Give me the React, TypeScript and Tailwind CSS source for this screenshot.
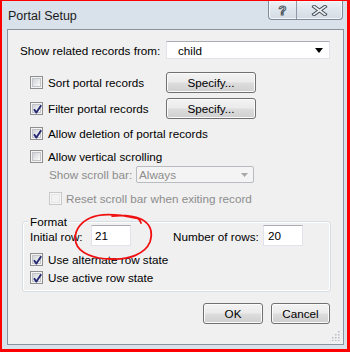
import clsx from 'clsx'

// Win7-style check box, 13x13
function Check({ checked, disabled }: { checked?: boolean; disabled?: boolean }) {
  return (
    <span
      className={clsx(
        'relative grid h-[13px] w-[13px] shrink-0 place-items-center border',
        disabled ? 'border-[#c8c8c8] bg-[#f7f7f7]' : 'border-[#8e8f8f] bg-[#f4f4f4]'
      )}
    >
      <span
        className={clsx(
          'h-[9px] w-[9px] border',
          disabled
            ? 'border-[#e6e6e6] bg-[#f2f2f2]'
            : 'border-[#c2c4c8] bg-[linear-gradient(135deg,#cfd2d7_0%,#e8e9eb_55%,#fbfbfb_100%)]'
        )}
      />
      {checked && (
        <svg className="absolute left-0 top-0" width="13" height="13" viewBox="0 0 13 13">
          <path d="M3 6.2 L5.4 9.6 L10.2 2.2" fill="none" stroke="#262a72" strokeWidth="1.9" strokeLinejoin="round" />
        </svg>
      )}
    </span>
  )
}

function Button({ label, className }: { label: string; className?: string }) {
  return (
    <div
      className={clsx(
        'grid h-[21px] place-items-center rounded-[3px] border border-[#707070] bg-[linear-gradient(#f3f3f3_0%,#ebebeb_48%,#dddddd_52%,#cfcfcf_100%)] shadow-[inset_0_0_0_1px_#fbfbfb]',
        className
      )}
    >
      {label}
    </div>
  )
}

function Row({ className, children }: { className?: string; children: React.ReactNode }) {
  return <div className={clsx('flex items-center whitespace-nowrap', className)}>{children}</div>
}

export default function App() {
  return (
    <div className="relative h-[352px] w-[350px] overflow-hidden font-['Liberation_Sans',Arial,sans-serif] text-[11.7px] leading-none text-black">
      <div className="flex h-full w-full flex-col border-b-[3px] border-l-2 border-r-[3px] border-t border-[#ff0000] bg-[#d9e1ea]">
        {/* title bar */}
        <div className="flex h-[28px] shrink-0 items-start justify-between pl-[6px] pr-[4px]">
          <span className="self-center pt-[2px] text-[12.5px] text-[#1b1b1b]">Portal Setup</span>
          <div className="flex h-[19px] overflow-hidden rounded-b-[4px] border border-t-0 border-[#7f8b98] bg-[linear-gradient(#eef2f6,#dfe5ec_50%,#d3dbe4)] shadow-[inset_0_0_0_1px_#f5f8fb]">
            <div className="grid w-[28px] place-items-center border-r border-[#8e99a5] text-[13px] font-bold text-[#f6f7f8] [-webkit-text-stroke:1px_#4c5661]">
              ?
            </div>
            <div className="grid w-[45px] place-items-center">
              <svg width="17" height="11" viewBox="0 0 17 11">
                <path d="M3 1.5 L14 9.5 M14 1.5 L3 9.5" stroke="#4a535d" strokeWidth="3.6" strokeLinecap="square" />
                <path d="M3 1.5 L14 9.5 M14 1.5 L3 9.5" stroke="#eef0f2" strokeWidth="1.6" strokeLinecap="square" />
              </svg>
            </div>
          </div>
        </div>

        {/* client area */}
        <div className="relative ml-[5px] mr-[3px] flex h-[316px] shrink-0 flex-col border border-[#8a939d] bg-[#f0f0f0]">
          <Row className="mt-[11px] h-[18px] pl-[12px]">
            <span className="w-[146px] pt-[2px]">Show related records from:</span>
            <div className="flex h-[18px] w-[164px] items-center justify-between border border-[#e2e3ea] border-t-[#abadb3] bg-white pl-[11px] pr-[6px]">
              <span className="pt-[1px]">child</span>
              <svg width="8" height="5" viewBox="0 0 8 5">
                <path d="M0 0 H8 L4 5 Z" fill="#000" />
              </svg>
            </div>
          </Row>

          <Row className="mt-[13px] h-[21px] pl-[22px]">
            <div className="flex w-[136px] items-center gap-[5px]">
              <Check />
              <span className="pt-[1px]">Sort portal records</span>
            </div>
            <Button label="Specify..." className="w-[90px]" />
          </Row>

          <Row className="mt-[5px] h-[21px] pl-[22px]">
            <div className="flex w-[136px] items-center gap-[5px]">
              <Check checked />
              <span className="pt-[1px]">Filter portal records</span>
            </div>
            <Button label="Specify..." className="w-[90px]" />
          </Row>

          <Row className="mt-[7px] h-[14px] gap-[5px] pl-[22px]">
            <Check checked />
            <span className="pt-[2px]">Allow deletion of portal records</span>
          </Row>

          <Row className="mt-[9px] h-[14px] gap-[5px] pl-[22px]">
            <Check />
            <span className="pt-[2px]">Allow vertical scrolling</span>
          </Row>

          <Row className="mt-[3px] h-[17px] pl-[41px] text-[#8d8d8d]">
            <span className="w-[87px] pt-[1px]">Show scroll bar:</span>
            <div className="flex h-[17px] w-[118px] items-center justify-between rounded-[2px] border border-[#b8bcc0] bg-[#f4f4f4] pl-[2px] pr-[5px]">
              <span>Always</span>
              <svg width="7" height="4" viewBox="0 0 7 4">
                <path d="M0 0 H7 L3.5 4 Z" fill="#a8a8a8" />
              </svg>
            </div>
          </Row>

          <Row className="mt-[8px] h-[14px] gap-[4px] pl-[41px] text-[#8d8d8d]">
            <Check disabled />
            <span className="pt-[2px]">Reset scroll bar when exiting record</span>
          </Row>

          {/* Format group */}
          <div className="relative ml-[14px] mt-[16px] h-[71px] w-[309px] rounded-[3px] border border-[#d5dfe5] pt-[3px] shadow-[inset_0_0_0_1px_#ffffff]">
            <span className="absolute -top-[7px] left-[5px] bg-[#f0f0f0] px-[2px] leading-[14px]">Format</span>
            <Row className="h-[21px] pl-[7px]">
              <span className="w-[61px] pt-[2px]">Initial row:</span>
              <div className="flex h-[21px] w-[40px] items-center border border-[#e2e3ea] border-t-[#abadb3] bg-white pl-[3px] pt-[1px]">21</div>
              <span className="ml-[42px] w-[90px] pt-[2px]">Number of rows:</span>
              <div className="flex h-[21px] w-[40px] items-center border border-[#e2e3ea] border-t-[#abadb3] bg-white pl-[4px] pt-[1px]">20</div>
            </Row>
            <Row className="mt-[6px] h-[14px] gap-[5px] pl-[7px]">
              <Check checked />
              <span className="pt-[2px]">Use alternate row state</span>
            </Row>
            <Row className="mt-[4px] h-[14px] gap-[5px] pl-[7px]">
              <Check checked />
              <span className="pt-[2px]">Use active row state</span>
            </Row>
          </div>

          <div className="mt-[11px] flex justify-end gap-[8px] pr-[13px]">
            <Button label="OK" className="w-[60px]" />
            <Button label="Cancel" className="w-[59px]" />
          </div>

          {/* size grip */}
          <svg className="absolute bottom-[3px] right-[3px]" width="10" height="10" viewBox="0 0 10 10">
            {[
              [8, 0], [8, 3], [5, 3], [8, 6], [5, 6], [2, 6], [8, 9], [5, 9], [2, 9], [-1, 9],
            ].map(([x, y], i) => (
              <rect key={i} x={x} y={y} width="1.5" height="1.5" fill="#b8bdc3" />
            ))}
          </svg>
        </div>
      </div>

      {/* hand-drawn red annotation */}
      <svg className="pointer-events-none absolute left-0 top-0" width="350" height="352" viewBox="0 0 350 352">
        <path
          d="M141 223 C140 220 139 218 136 218 C122 215 102 212 90 218 C79 223 73 233 76 243 C79 253 94 259 111 259 C129 260 145 254 150 242 C153 232 151 224 141 219 C133 216 121 215 112 216"
          fill="none"
          stroke="#f01010"
          strokeWidth="1.8"
          strokeLinecap="round"
        />
      </svg>
    </div>
  )
}
